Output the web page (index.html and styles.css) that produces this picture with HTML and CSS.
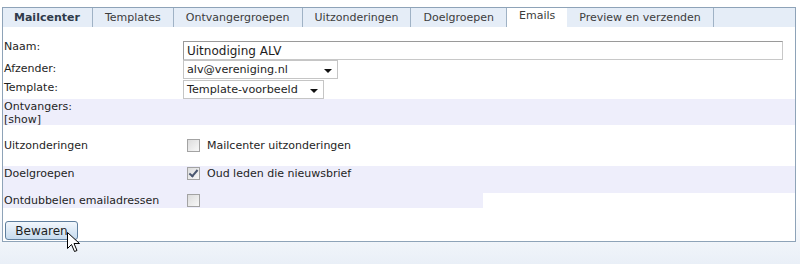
FILE: index.html
```html
<!DOCTYPE html>
<html lang="nl">
    <head>
        <meta charset="UTF-8" />
        <title>Mailcenter - Emails</title>
        <link rel="stylesheet" href="styles.css">
    </head>
    <body>
        <div class="frame">
            <ul class="tabs">
                <li class="home">Mailcenter</li>
                <li>Templates</li>
                <li>Ontvangergroepen</li>
                <li>Uitzonderingen</li>
                <li>Doelgroepen</li>
                <li class="active">Emails</li>
                <li>Preview en verzenden</li>
            </ul>
            <div class="panel">
                <div class="row field">
                    <label>Naam:</label>
                    <input class="text" type="text" value="Uitnodiging ALV">
                </div>
                <div class="row field short">
                    <label class="mid">Afzender:</label>
                    <span class="select sender">alv@vereniging.nl</span>
                </div>
                <div class="row field short">
                    <label class="mid">Template:</label>
                    <span class="select template">Template-voorbeeld</span>
                </div>
                <div class="row alt recipients">
                    <label>Ontvangers:<br>[show]</label>
                    <span></span>
                </div>
                <div class="row check first">
                    <label>Uitzonderingen</label>
                    <span><i class="box"></i>Mailcenter uitzonderingen</span>
                </div>
                <div class="row check alt">
                    <label>Doelgroepen</label>
                    <span><i class="box checked"></i>Oud leden die nieuwsbrief</span>
                </div>
                <div class="row check alt narrow">
                    <label>Ontdubbelen emailadressen</label>
                    <span><i class="box"></i></span>
                </div>
                <button class="save">Bewaren</button>
            </div>
        </div>
        <!-- mouse pointer over the button -->
        <svg class="cursor" width="13" height="21" viewBox="0 0 13 21">
            <path d="M0.5 0.5 L0.5 16.5 L4.5 12.5 L7.5 19.5 L10 18.5 L7 11.5 L12.5 11.5 Z" fill="#fff" stroke="#000" stroke-width="1" stroke-linejoin="miter"/>
        </svg>
    </body>
</html>
```

FILE: styles.css
```css
* {
    box-sizing: border-box;
}
body {
    margin: 0;
    padding: 7px 0 0 2px;
    height: 264px;
    overflow: hidden;
    font-family: "DejaVu Sans", Verdana, sans-serif;
    font-size: 11px;
    color: #1e1e1e;
    background: linear-gradient(to bottom, #ffffff 0, #ffffff 200px, #e9eff7 264px);
    position: relative;
}
.frame {
    width: 794px;
    height: 235px;
    border: 1px solid #8ea3b8;
    background: #fff;
}
.tabs {
    list-style: none;
    margin: 0;
    padding: 0;
    display: flex;
    height: 19px;
    background: #e5edf7;
}
.tabs li {
    padding: 3px 12px 0 12px;
    border-right: 1px solid #9fb2c5;
    font-size: 11px;
    color: #3c3c3c;
    line-height: 14px;
}
.tabs .home {
    padding-left: 11px;
    font-weight: bold;
    color: #2f3b4a;
}
.tabs .active {
    background: #fff;
    border-right: none;
    padding-top: 1px;
}
.panel {
    padding: 13px 0 0 0;
}
.row {
    display: grid;
    grid-template-columns: 180px 600px;
}
.row label {
    padding-left: 1px;
    line-height: 13px;
}
.row label.mid {
    padding-top: 2px;
}
.field {
    height: 20px;
}
.field.short {
    height: 19px;
}
.text {
    margin: 1px 0 0 0;
    width: 600px;
    height: 19px;
    border: 1px solid #c8c8c8;
    border-top-color: #9a9a9a;
    border-left-color: #9a9a9a;
    padding: 0 3px;
    font-family: inherit;
    font-size: 12px;
    color: #1e1e1e;
}
.select {
    position: relative;
    display: block;
    height: 19px;
    border: 1px solid #c5c5c5;
    padding: 1px 0 0 3px;
    font-size: 11.2px;
    line-height: 15px;
}
.select::after {
    content: "";
    position: absolute;
    right: 5px;
    top: 8px;
    border-left: 4px solid transparent;
    border-right: 4px solid transparent;
    border-top: 4px solid #111;
}
.sender {
    width: 155px;
}
.template {
    width: 141px;
    margin-top: 1px;
}
.alt {
    background: #eeeefb;
}
.recipients {
    margin-top: 1px;
    height: 26px;
}
.recipients label {
    padding-top: 1px;
}
.check {
    height: 27px;
}
.check span {
    display: flex;
    align-items: flex-start;
    padding: 1px 0 0 4px;
    line-height: 13px;
}
.check label {
    padding-top: 1px;
}
.check.first {
    margin-top: 13px;
    height: 28px;
}
.narrow {
    height: 15px;
    width: 480px;
    grid-template-columns: 180px 300px;
}
.box {
    display: inline-block;
    width: 13px;
    height: 13px;
    margin-right: 7px;
    border: 1px solid #a3a3a3;
    background: linear-gradient(135deg, #dcdcdc, #f8f8f8);
    position: relative;
}
.box.checked::after {
    content: "";
    position: absolute;
    left: 3px;
    top: 0px;
    width: 3px;
    height: 7px;
    border-right: 2px solid #4a5770;
    border-bottom: 2px solid #4a5770;
    transform: rotate(40deg);
}
.save {
    margin: 13px 0 0 2px;
    width: 73px;
    height: 19px;
    border: 1px solid #5f7f9e;
    border-radius: 3px;
    background: linear-gradient(to bottom, #f2f7fc, #c6dbef);
    font-family: inherit;
    font-size: 12px;
    color: #1e1e1e;
    padding: 0;
}
.cursor {
    position: absolute;
    left: 67px;
    top: 232px;
}
```
